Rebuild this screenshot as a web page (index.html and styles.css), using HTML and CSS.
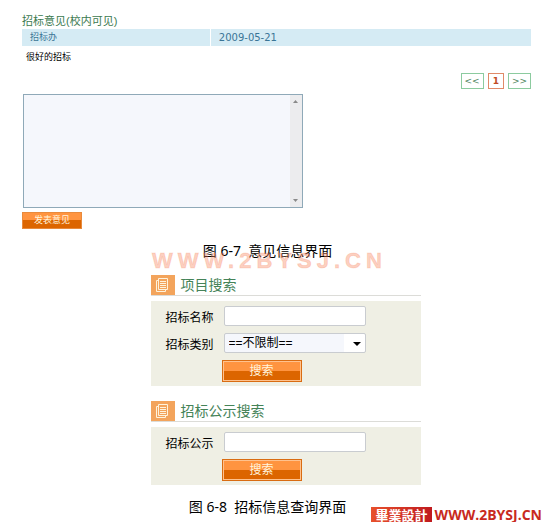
FILE: index.html
```
<!DOCTYPE html>
<html lang="zh-CN">
<head>
    <meta charset="UTF-8">
    <meta name="viewport" content="width=device-width, initial-scale=1.0">
    <title>招标信息</title>
    <link rel="stylesheet" href="styles.css">
</head>
<body>
    <div class="page">
        <section class="opinions">
            <h1 class="opinions-title">招标意见(校内可见)</h1>
            <table class="opinions-table">
                <tr class="opinion-head">
                    <td class="opinion-author">招标办</td>
                    <td class="opinion-date">2009-05-21</td>
                </tr>
                <tr>
                    <td class="opinion-text" colspan="2">很好的招标</td>
                </tr>
            </table>
            <nav class="pager">
                <a class="page-link" href="#">&lt;&lt;</a>
                <a class="page-link current" href="#">1</a>
                <a class="page-link" href="#">&gt;&gt;</a>
            </nav>
            <form class="opinion-form">
                <div class="opinion-box">
                    <textarea class="opinion-input" aria-label="发表意见"></textarea>
                    <div class="scroll-track">
                        <svg width="5" height="3" viewBox="0 0 5 3"><path d="M0 3L2.5 0L5 3z" fill="#8a8a8a"/></svg>
                        <svg width="5" height="3" viewBox="0 0 5 3"><path d="M0 0L2.5 3L5 0z" fill="#8a8a8a"/></svg>
                    </div>
                </div>
                <button class="button small" type="button">发表意见</button>
            </form>
        </section>

        <div class="caption">
            图 6-7&nbsp; 意见信息界面
            <span class="watermark">WWW.2BYSJ.CN</span>
        </div>

        <div class="searches">
            <section class="search">
                <div class="search-header">
                    <svg class="search-icon" width="24" height="20" viewBox="0 0 24 20">
                        <rect width="24" height="20" fill="#f3a45c"/>
                        <g fill="none" stroke="#fff3dc">
                            <path d="M7.5 3.5h9v11h-9z"/>
                            <path d="M7 5.5H5.5v11h9V15"/>
                            <path d="M9 6.500h6M9 8.500h6M9 10.500h6M9 12.500h6"/>
                        </g>
                    </svg>
                    <h2 class="search-title">项目搜索</h2>
                </div>
                <form class="search-form">
                    <label for="projectName">招标名称</label>
                    <input class="field" type="text" id="projectName">
                    <label for="projectType">招标类别</label>
                    <div class="select-wrap">
                        <select class="field" id="projectType">
                            <option>==不限制==</option>
                        </select>
                        <svg class="select-arrow" width="8" height="4" viewBox="0 0 8 4"><path d="M0 0h8L4 4z"/></svg>
                    </div>
                    <button class="button" type="button">搜索</button>
                </form>
            </section>

            <section class="search">
                <div class="search-header">
                    <svg class="search-icon" width="24" height="20" viewBox="0 0 24 20">
                        <rect width="24" height="20" fill="#f3a45c"/>
                        <g fill="none" stroke="#fff3dc">
                            <path d="M7.5 3.5h9v11h-9z"/>
                            <path d="M7 5.5H5.5v11h9V15"/>
                            <path d="M9 6.500h6M9 8.500h6M9 10.500h6M9 12.500h6"/>
                        </g>
                    </svg>
                    <h2 class="search-title">招标公示搜索</h2>
                </div>
                <form class="search-form">
                    <label for="noticeName">招标公示</label>
                    <input class="field" type="text" id="noticeName">
                    <button class="button" type="button">搜索</button>
                </form>
            </section>
        </div>

        <div class="caption">图 6-8&nbsp; 招标信息查询界面</div>
    </div>

    <div class="brand">
        <span class="brand-tag">畢業設計</span>
        <span class="brand-url">WWW.2BYSJ.CN</span>
    </div>
</body>
</html>
```
FILE: styles.css
```
* {
    box-sizing: border-box;
}
body {
    margin: 0;
    min-height: 100vh;
    position: relative;
    background-color: #fff;
    color: #000;
    font-family: "Liberation Sans", "Noto Sans CJK SC", sans-serif;
    font-size: 12px;
}
.page {
    padding: 13px 11px 0 22px;
}
.opinions-title {
    margin: 0;
    font-size: 11px;
    line-height: 16px;
    font-weight: normal;
    color: #3c7a50;
}
.opinions-table {
    width: 100%;
    border-collapse: collapse;
    font-size: 9px;
    line-height: 17px;
}
.opinions-table td {
    padding: 0 8px;
}
.opinion-head {
    background-color: #d5ebf4;
    color: #3a7596;
}
.opinions-table .opinion-author {
    width: 37%;
    border-right: 1px solid #fff;
}
.opinion-date {
    font-family: "DejaVu Sans", sans-serif;
    font-size: 10px;
}
.opinions-table .opinion-text {
    padding: 3px 4px;
}
.pager {
    display: flex;
    justify-content: flex-end;
    gap: 4px;
    margin-top: 4px;
}
.page-link {
    padding: 0 3px;
    border: 1px solid #8ccb9f;
    font-family: "DejaVu Sans", sans-serif;
    font-size: 9px;
    line-height: 14px;
    color: #4f8560;
    text-decoration: none;
}
.page-link.current {
    padding: 0 4px;
    border-color: #e08a68;
    color: #c04a25;
    font-weight: bold;
}
.opinion-form {
    display: flex;
    flex-direction: column;
    align-items: flex-start;
    gap: 4px;
    margin-top: 5px;
}
.opinion-box {
    display: flex;
    width: 55%;
    height: 114px;
    margin-left: 1px;
    border: 1px solid #8fa9b8;
}
.opinion-input {
    flex: 1;
    min-width: 0;
    padding: 4px;
    border: none;
    outline: none;
    resize: none;
    background-color: #f5f7fc;
}
.scroll-track {
    width: 12px;
    padding: 5px 0;
    display: flex;
    flex-direction: column;
    justify-content: space-between;
    align-items: center;
    background-color: #ececee;
}
.button {
    width: 80px;
    height: 22px;
    padding: 0;
    border: 1px solid #d96c12;
    box-shadow: inset 0 0 0 1px #ffc28e;
    background: linear-gradient(#ff9440 50%, #dc6500 50%);
    color: #fff4dc;
    font-family: inherit;
    font-size: 12px;
    line-height: 18px;
    cursor: pointer;
}
.button.small {
    width: 60px;
    height: 17px;
    border-color: #e88a3c;
    box-shadow: none;
    font-size: 9px;
    line-height: 13px;
}
.caption {
    position: relative;
    padding-right: 18px;
    text-align: center;
    font-family: "Noto Sans", "Noto Sans CJK SC", sans-serif;
    font-size: 14px;
    line-height: 20px;
    margin-top: 12px;
}
.watermark {
    position: absolute;
    top: 8px;
    left: 130px;
    font-family: "Liberation Sans", sans-serif;
    font-size: 22px;
    line-height: 24px;
    font-weight: bold;
    letter-spacing: 5px;
    color: rgba(247, 130, 90, 0.4);
    -webkit-text-stroke: 1px rgba(247, 130, 90, 0.2);
}
.searches {
    display: flex;
    flex-direction: column;
    align-items: center;
    gap: 15px;
    padding-left: 18px;
    margin-top: 14px;
}
.search {
    width: 270px;
}
.search-header {
    display: flex;
    gap: 6px;
    height: 21px;
    border-bottom: 1px solid #dcdcd8;
}
.search-icon {
    flex: none;
}
.search-title {
    margin: 0;
    font-size: 14px;
    line-height: 20px;
    font-weight: normal;
    color: #458358;
}
.search-form {
    display: grid;
    grid-template-columns: 58px 142px;
    row-gap: 7px;
    align-items: center;
    margin-top: 5px;
    padding: 5px 15px 4px;
    background-color: #efefe4;
}
.search-form .button {
    grid-column: 2;
    margin-left: -2px;
}
.field {
    display: block;
    width: 100%;
    height: 20px;
    padding: 0 4px;
    border: 1px solid #c9ccd0;
    border-radius: 2px;
    background-color: #fff;
    color: #000;
    font-family: inherit;
    font-size: 12px;
    appearance: none;
}
select.field {
    background: linear-gradient(to right, #f5f7fc 85%, #fff 85%);
}
.select-wrap {
    position: relative;
}
.select-arrow {
    position: absolute;
    top: 9px;
    right: 5px;
    pointer-events: none;
}
.brand {
    position: absolute;
    right: 0;
    bottom: 0;
    display: flex;
    align-items: center;
    gap: 3px;
    height: 15px;
    color: #c82a20;
    font-size: 13px;
    line-height: 15px;
    font-weight: bold;
}
.brand-tag {
    padding: 0 4px 0 5px;
    background: linear-gradient(to right, #e8502c, #bf1a1e);
    color: #fff;
    font-family: "Noto Sans CJK TC", sans-serif;
}
.brand-url {
    font-family: "Open Sans", sans-serif;
    font-size: 14px;
}
```
